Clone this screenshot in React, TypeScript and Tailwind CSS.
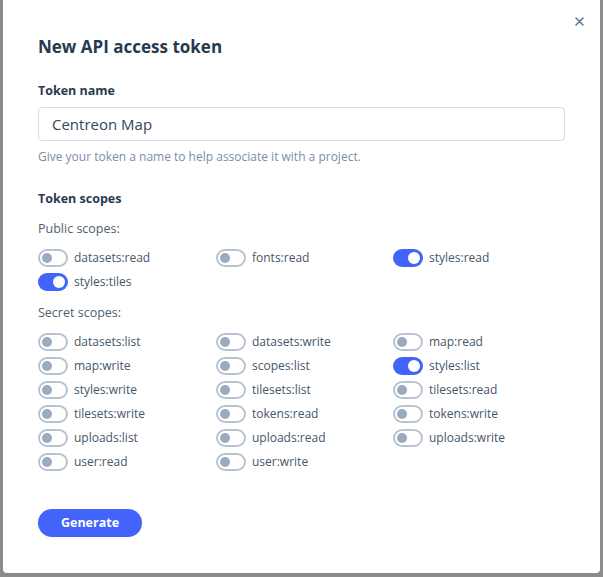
import React, { useState } from 'react';

const publicScopes = ['datasets:read', 'fonts:read', 'styles:read', 'styles:tiles'];
const secretScopes = [
  'datasets:list', 'datasets:write', 'map:read',
  'map:write', 'scopes:list', 'styles:list',
  'styles:write', 'tilesets:list', 'tilesets:read',
  'tilesets:write', 'tokens:read', 'tokens:write',
  'uploads:list', 'uploads:read', 'uploads:write',
  'user:read', 'user:write',
];

const Toggle: React.FC<{ label: string; on: boolean; onChange: () => void }> = ({ label, on, onChange }) => (
  <button type="button" onClick={onChange} className="flex items-center h-6 text-left">
    {on ? (
      <span className="w-[30px] h-[18px] rounded-full bg-[#4264fb] flex items-center justify-end pr-[3px]">
        <span className="w-[12px] h-[12px] rounded-full bg-white" />
      </span>
    ) : (
      <span className="w-[30px] h-[18px] rounded-full border-2 border-[#b8c3d1] flex items-center pl-[2px]">
        <span className="w-[10px] h-[10px] rounded-full bg-[#9aaabf]" />
      </span>
    )}
    <span className="ml-[6px] text-[12px] text-[#44566b]">{label}</span>
  </button>
);

export default function App() {
  const [name, setName] = useState('Centreon Map');
  const [checked, setChecked] = useState<Record<string, boolean>>({
    'styles:read': true,
    'styles:tiles': true,
    'styles:list': true,
  });

  const flip = (s: string) => setChecked((c) => ({ ...c, [s]: !c[s] }));

  return (
    <div className="w-[603px] h-[577px] bg-[#8c8c8c] overflow-hidden" style={{ fontFamily: '"Open Sans", "Liberation Sans", sans-serif' }}>
      <div className="relative ml-[3px] w-[597px] h-[573px] bg-white rounded-b-[4px] px-[35px] pt-[35px]">
        <button type="button" className="absolute right-[14px] top-[14px] w-[14px] h-[14px] flex items-center justify-center">
          <svg width="9" height="9" viewBox="0 0 9 9" fill="none" stroke="#5f7894" strokeWidth="1.6" strokeLinecap="round">
            <path d="M1 1l7 7M8 1l-7 7" />
          </svg>
        </button>

        <h1 className="text-[17px] leading-6 font-bold text-[#273a4f]">New API access token</h1>

        <label className="block mt-[23px] text-[12.5px] leading-[18px] font-bold text-[#273a4f]">Token name</label>
        <input
          value={name}
          onChange={(e) => setName(e.target.value)}
          className="mt-[7px] w-[527px] h-[34px] px-[13px] border border-[#d3dbe6] rounded-[4px] text-[15px] text-[#33475b] outline-none"
        />
        <p className="mt-[7px] text-[12px] leading-[18px] text-[#7a8ea8]">Give your token a name to help associate it with a project.</p>

        <h2 className="mt-[24px] text-[12.5px] leading-[18px] font-bold text-[#273a4f]">Token scopes</h2>

        <p className="mt-[12px] text-[12.5px] leading-[18px] text-[#4f5f72]">Public scopes:</p>
        <div className="mt-[8px] grid grid-cols-[178px_177px_1fr]">
          {publicScopes.map((s) => (
            <Toggle key={s} label={s} on={!!checked[s]} onChange={() => flip(s)} />
          ))}
        </div>

        <p className="mt-[10px] text-[12.5px] leading-[18px] text-[#4f5f72]">Secret scopes:</p>
        <div className="mt-[8px] grid grid-cols-[178px_177px_1fr]">
          {secretScopes.map((s) => (
            <Toggle key={s} label={s} on={!!checked[s]} onChange={() => flip(s)} />
          ))}
        </div>

        <button type="button" className="mt-[35px] w-[104px] h-[28px] rounded-full bg-[#4264fb] text-white text-[12.5px] font-bold">
          Generate
        </button>
      </div>
    </div>
  );
}
